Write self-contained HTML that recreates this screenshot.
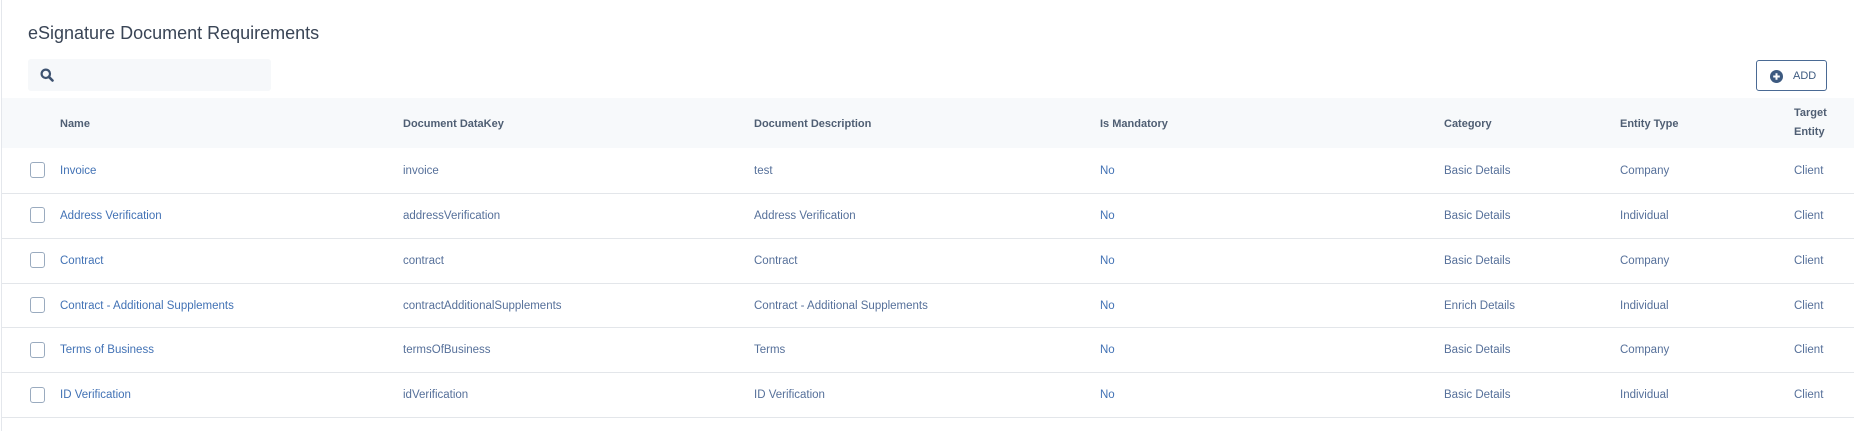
<!DOCTYPE html>
<html><head><meta charset="utf-8"><style>
*{margin:0;padding:0;box-sizing:border-box}
body{width:1854px;height:431px;background:#fff;font-family:"Liberation Sans",sans-serif;position:relative;overflow:hidden}
.vl{position:absolute;left:1px;top:0;width:1px;height:431px;background:#e4e7ec}
.title{position:absolute;left:28px;top:23px;font-size:18px;color:#3a4556}
.search{position:absolute;left:28px;top:59px;width:243px;height:32px;background:#f6f8fa;border-radius:3px}
.add{position:absolute;left:1756px;top:60px;width:71px;height:31px;border:1px solid #4a6a94;border-radius:3px;font-size:11px;color:#3d5a80;}
.add span{position:absolute;left:36px;top:9px}
.head{position:absolute;left:2px;top:98px;width:1852px;height:50px;background:#f7f9fb}
.t{position:absolute;font-size:11.5px;white-space:nowrap}
.h{color:#4f5e73;font-weight:bold;font-size:11px}
.a{color:#4272b5}
.d{color:#56709a}
.line{position:absolute;left:2px;width:1852px;height:1px;background:#e3e6ea}
.cb{position:absolute;left:30px;width:15px;height:16px;border:1.5px solid #9aabbf;border-radius:3px}
</style></head><body>
<div class="vl"></div>
<div class="title">eSignature Document Requirements</div>
<div class="search"><svg style="position:absolute;left:12px;top:9px" width="14" height="14" viewBox="0 0 14 14"><circle cx="5.8" cy="5.8" r="4.2" fill="none" stroke="#3d5270" stroke-width="2.2"/><path d="M8.8 8.8 L12.5 12.5" stroke="#3d5270" stroke-width="2.6" stroke-linecap="round"/></svg></div>
<div class="add"><svg style="position:absolute;left:13px;top:9px" width="13" height="13" viewBox="0 0 13 13"><circle cx="6.5" cy="6.5" r="6.5" fill="#3d5a80"/><path d="M6.5 3.2v6.6M3.2 6.5h6.6" stroke="#fff" stroke-width="2"/></svg><span>ADD</span></div>
<div class="head"></div>
<div class="t h" style="left:60px;top:118px">Name</div>
<div class="t h" style="left:403px;top:118px">Document DataKey</div>
<div class="t h" style="left:754px;top:118px">Document Description</div>
<div class="t h" style="left:1100px;top:118px">Is Mandatory</div>
<div class="t h" style="left:1444px;top:118px">Category</div>
<div class="t h" style="left:1620px;top:118px">Entity Type</div>
<div class="t h" style="left:1794px;top:107px">Target</div>
<div class="t h" style="left:1794px;top:126px">Entity</div>

<div class="cb" style="top:162px"></div>
<div class="t a" style="left:60px;top:165px">Invoice</div><div class="t d" style="left:403px;top:165px">invoice</div><div class="t d" style="left:754px;top:165px">test</div><div class="t a" style="left:1100px;top:165px">No</div><div class="t d" style="left:1444px;top:165px">Basic Details</div><div class="t d" style="left:1620px;top:165px">Company</div><div class="t d" style="left:1794px;top:165px">Client</div>
<div class="line" style="top:193px"></div>

<div class="cb" style="top:207px"></div>
<div class="t a" style="left:60px;top:210px">Address Verification</div><div class="t d" style="left:403px;top:210px">addressVerification</div><div class="t d" style="left:754px;top:210px">Address Verification</div><div class="t a" style="left:1100px;top:210px">No</div><div class="t d" style="left:1444px;top:210px">Basic Details</div><div class="t d" style="left:1620px;top:210px">Individual</div><div class="t d" style="left:1794px;top:210px">Client</div>
<div class="line" style="top:238px"></div>

<div class="cb" style="top:252px"></div>
<div class="t a" style="left:60px;top:255px">Contract</div><div class="t d" style="left:403px;top:255px">contract</div><div class="t d" style="left:754px;top:255px">Contract</div><div class="t a" style="left:1100px;top:255px">No</div><div class="t d" style="left:1444px;top:255px">Basic Details</div><div class="t d" style="left:1620px;top:255px">Company</div><div class="t d" style="left:1794px;top:255px">Client</div>
<div class="line" style="top:283px"></div>

<div class="cb" style="top:297px"></div>
<div class="t a" style="left:60px;top:300px">Contract - Additional Supplements</div><div class="t d" style="left:403px;top:300px">contractAdditionalSupplements</div><div class="t d" style="left:754px;top:300px">Contract - Additional Supplements</div><div class="t a" style="left:1100px;top:300px">No</div><div class="t d" style="left:1444px;top:300px">Enrich Details</div><div class="t d" style="left:1620px;top:300px">Individual</div><div class="t d" style="left:1794px;top:300px">Client</div>
<div class="line" style="top:327px"></div>

<div class="cb" style="top:342px"></div>
<div class="t a" style="left:60px;top:344px">Terms of Business</div><div class="t d" style="left:403px;top:344px">termsOfBusiness</div><div class="t d" style="left:754px;top:344px">Terms</div><div class="t a" style="left:1100px;top:344px">No</div><div class="t d" style="left:1444px;top:344px">Basic Details</div><div class="t d" style="left:1620px;top:344px">Company</div><div class="t d" style="left:1794px;top:344px">Client</div>
<div class="line" style="top:372px"></div>

<div class="cb" style="top:387px"></div>
<div class="t a" style="left:60px;top:389px">ID Verification</div><div class="t d" style="left:403px;top:389px">idVerification</div><div class="t d" style="left:754px;top:389px">ID Verification</div><div class="t a" style="left:1100px;top:389px">No</div><div class="t d" style="left:1444px;top:389px">Basic Details</div><div class="t d" style="left:1620px;top:389px">Individual</div><div class="t d" style="left:1794px;top:389px">Client</div>
<div class="line" style="top:417px"></div>
</body></html>
